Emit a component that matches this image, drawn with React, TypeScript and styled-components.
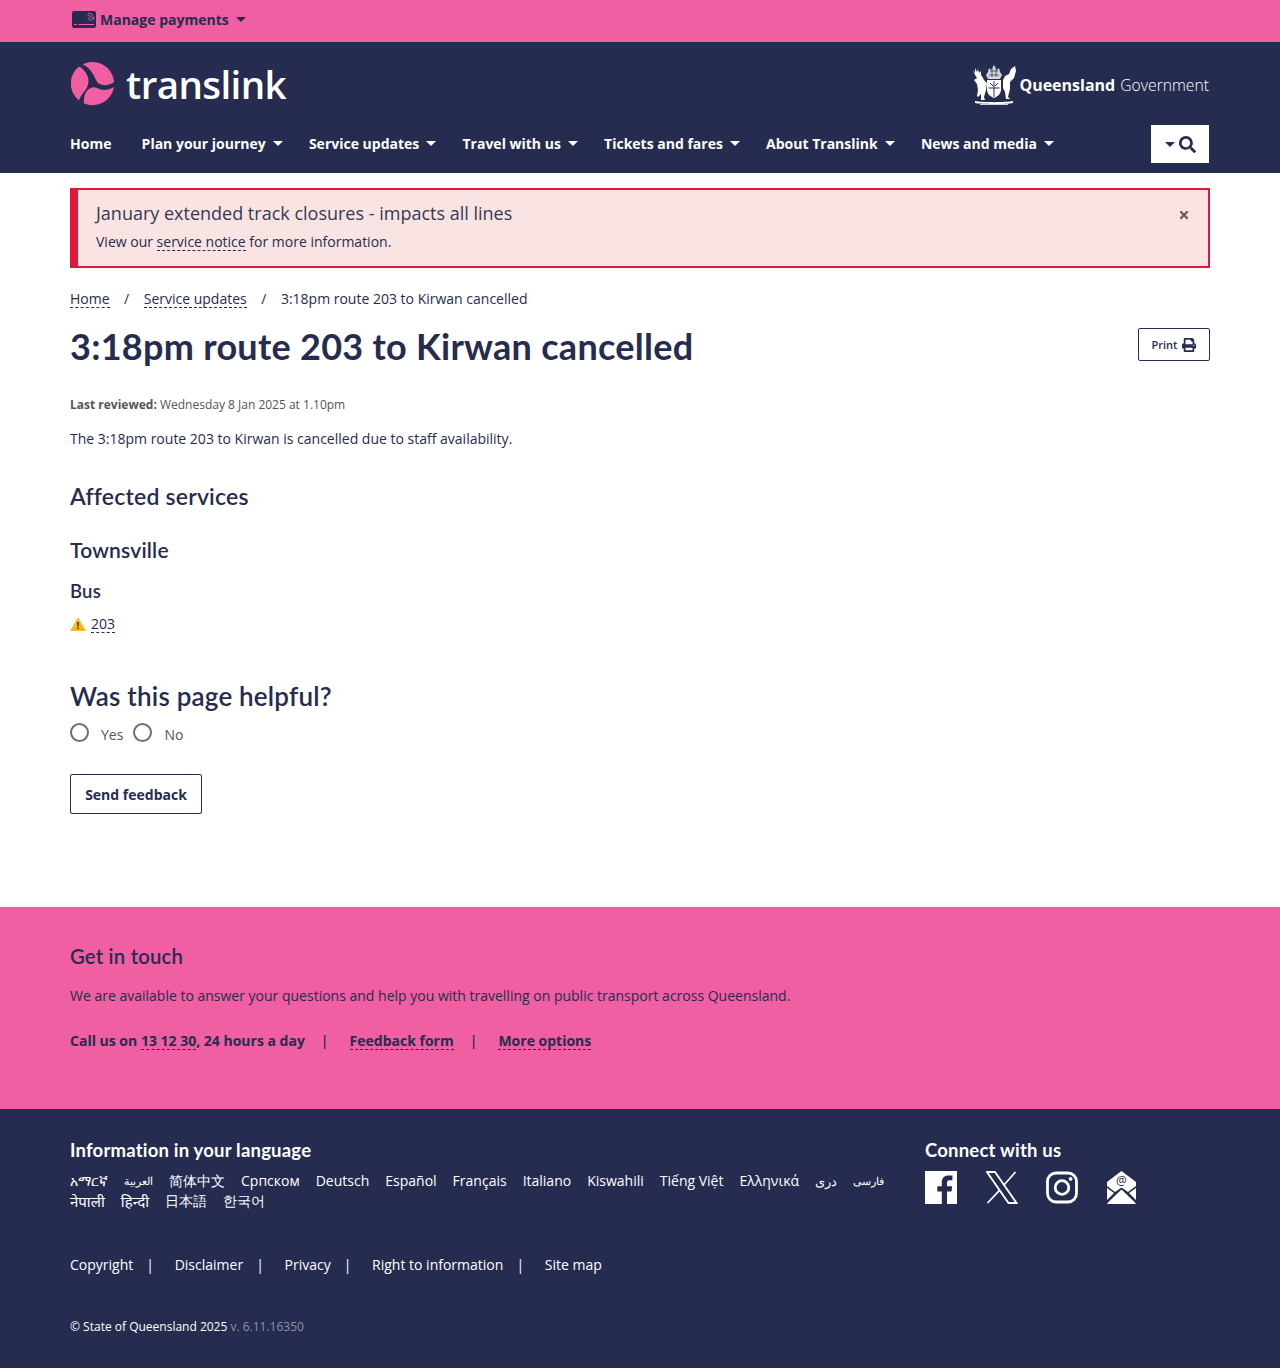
import styled, { createGlobalStyle } from "styled-components";
import { FaSearch, FaPrint, FaTimes } from "react-icons/fa";

const pink = "#f05fa2";
const navy = "#252c4f";

const GlobalStyle = createGlobalStyle`
  body {
    margin: 0;
    background: #fff;
    color: ${navy};
    font-family: "Open Sans", "Noto Sans", sans-serif;
    font-size: 14px;
  }
`;

const Wrap = styled.div`
  width: 1140px;
  margin: 0 auto;
`;

const TopBar = styled.div`
  background: ${pink};
  height: 42px;
`;

const Caret = styled.span<{ $color?: string }>`
  display: inline-block;
  width: 0;
  height: 0;
  border-left: 5px solid transparent;
  border-right: 5px solid transparent;
  border-top: 5px solid ${({ $color }) => $color ?? "#fff"};
  margin-left: 7px;
`;

const PayButton = styled.div`
  display: flex;
  align-items: center;
  height: 38px;
  padding-left: 2px;
  gap: 4px;
  font-size: 14px;
  font-weight: 700;
  ${Caret} {
    margin-left: 3px;
  }
`;

const Header = styled.header`
  background: ${navy};
  height: 131px;
`;

const BrandRow = styled.div`
  display: flex;
  justify-content: space-between;
  align-items: center;
  height: 83px;
`;

const Brand = styled.div`
  display: flex;
  align-items: center;
  gap: 11px;
  padding-left: 1px;
  color: #fff;
  font-size: 38.500px;
  font-weight: 600;
  letter-spacing: -0.6px;
`;

const Gov = styled.div`
  display: flex;
  align-items: center;
  gap: 3px;
  margin-top: 2px;
  color: #fff;
  padding-right: 1px;
  font-weight: 300;
  b {
    font-size: 16px;
    font-weight: 700;
    margin-right: 1px;
  }
`;

const GovName = styled.span`
  font-size: 15.700px;
`;

const NavRow = styled.nav`
  display: flex;
  align-items: center;
  justify-content: space-between;
  height: 38px;
  padding-right: 1px;
`;

const NavList = styled.div`
  display: flex;
  gap: 26.200px;
  margin-top: -2px;
`;

const NavItem = styled.a<{ $plain?: boolean }>`
  color: #fff;
  font-size: 14px;
  font-weight: 700;
  display: flex;
  align-items: center;
  margin-right: ${({ $plain }) => ($plain ? "4px" : "0")};
`;

const SearchButton = styled.div`
  width: 58px;
  height: 38px;
  background: #fff;
  display: flex;
  align-items: center;
  justify-content: center;
  gap: 4px;
  color: ${navy};
  font-size: 17px;
  ${Caret} {
    margin: 0;
  }
`;

const Main = styled.main`
  height: 734px;
  padding-top: 15px;
  box-sizing: border-box;
`;

const Alert = styled.div`
  display: flex;
  justify-content: space-between;
  height: 80px;
  box-sizing: border-box;
  background: #f9e4e3;
  border: 2px solid #e4173a;
  border-left-width: 8px;
  padding: 11px 18px 0 18px;
`;

const AlertTitle = styled.div`
  font-size: 18px;
  line-height: 24px;
  color: #333a56;
`;

const AlertText = styled.div`
  font-size: 14px;
  line-height: 20px;
  margin-top: 7px;
`;

const Dashed = styled.a`
  display: inline-block;
  line-height: 17px;
  border-bottom: 1px dashed currentColor;
`;

const CloseIcon = styled.span`
  color: #6b5a5f;
  font-size: 12px;
  margin-top: 7px;
`;

const Crumbs = styled.div`
  display: flex;
  align-items: baseline;
  gap: 14.500px;
  margin-top: 21px;
  line-height: 20px;
  font-size: 14px;
`;

const TitleRow = styled.div`
  display: flex;
  justify-content: space-between;
  align-items: flex-start;
  margin-top: 12px;
`;

const Title = styled.h1`
  margin: 0;
  font-family: Lato, sans-serif;
  font-size: 36px;
  line-height: 50px;
  font-weight: 700;
  letter-spacing: 0.28px;
`;

const PrintButton = styled.div`
  display: flex;
  align-items: center;
  justify-content: center;
  gap: 5px;
  width: 72px;
  height: 33px;
  box-sizing: border-box;
  border: 1px solid ${navy};
  border-radius: 2px;
  font-size: 11px;
  font-weight: 600;
  margin-top: 7px;
  svg {
    font-size: 14px;
  }
`;

const Reviewed = styled.p`
  margin: 25px 0 0;
  font-size: 12px;
  line-height: 18px;
  color: #555;
  b {
    font-weight: 700;
  }
`;

const Body = styled.p`
  margin: 15px 0 0;
  font-size: 14px;
  line-height: 20px;
`;

const Heading = styled.h2<{ $size: number; $top: number }>`
  margin: ${({ $top }) => $top}px 0 0;
  font-family: Lato, sans-serif;
  font-size: ${({ $size }) => $size}px;
  line-height: 30px;
  font-weight: 600;
  letter-spacing: 0.2px;
`;

const Service = styled.div`
  display: flex;
  align-items: center;
  gap: 5px;
  margin-top: 7px;
  height: 21px;
`;

const Radios = styled.div`
  display: flex;
  align-items: center;
  margin-top: 10px;
  height: 26px;
  color: #555;
`;

const Radio = styled.span`
  width: 19px;
  height: 19px;
  box-sizing: border-box;
  border: 2px solid #6e6e6e;
  border-radius: 50%;
  margin-top: -4px;
`;

const RadioLabel = styled.label`
  margin: 0 10px 0 12px;
  line-height: 20px;
  padding-top: 1px;
`;

const SendButton = styled.div`
  display: flex;
  align-items: center;
  justify-content: center;
  width: 132px;
  height: 40px;
  box-sizing: border-box;
  border: 1px solid ${navy};
  border-radius: 2px;
  font-weight: 700;
  margin-top: 27px;
`;

const Touch = styled.section`
  background: ${pink};
  height: 202px;
  padding-top: 34px;
  box-sizing: border-box;
`;

const TouchLinks = styled.div`
  display: flex;
  align-items: baseline;
  font-weight: 700;
  margin-top: 25px;
  line-height: 20px;
`;

const Sep = styled.span`
  margin: 0 21px 0 16px;
  font-weight: 600;
`;

const Footer = styled.footer`
  background: ${navy};
  height: 259px;
  color: #fff;
  padding-top: 27px;
  box-sizing: border-box;
`;

const FooterTop = styled.div`
  display: flex;
  justify-content: space-between;
`;

const FooterHeading = styled.div`
  font-family: Lato, sans-serif;
  font-size: 18.500px;
  font-weight: 700;
  letter-spacing: 0.2px;
  line-height: 28px;
`;

const Languages = styled.div`
  width: 830px;
  display: flex;
  flex-wrap: wrap;
  gap: 0 16px;
  line-height: 20px;
  margin-top: 7px;
`;

const Language = styled.a<{ $size?: number }>`
  font-size: ${({ $size }) => $size ?? 14}px;
`;

const Connect = styled.div`
  width: 285px;
`;

const Socials = styled.div`
  display: flex;
  align-items: center;
  gap: 28.700px;
  margin-top: 7px;
  svg {
    display: block;
  }
`;

const LegalLinks = styled.div`
  display: flex;
  margin-top: 44px;
  line-height: 20px;
`;

const LegalSep = styled.span`
  margin: 0 20.700px 0 13px;
`;

const Copy = styled.div`
  margin-top: 43px;
  font-size: 12px;
  line-height: 18px;
  span {
    color: #8f93a6;
  }
`;

const languages: { label: string; size?: number }[] = [
  { label: "አማርኛ" },
  { label: "العربية", size: 10.5 },
  { label: "简体中文" },
  { label: "Српском" },
  { label: "Deutsch" },
  { label: "Español" },
  { label: "Français" },
  { label: "Italiano" },
  { label: "Kiswahili" },
  { label: "Tiếng Việt" },
  { label: "Ελληνικά" },
  { label: "دری", size: 13 },
  { label: "فارسی", size: 11 },
  { label: "नेपाली", size: 15 },
  { label: "हिन्दी", size: 15 },
  { label: "日本語" },
  { label: "한국어" },
];
const navItems = ["Plan your journey", "Service updates", "Travel with us", "Tickets and fares", "About Translink", "News and media"];
const legal = ["Copyright", "Disclaimer", "Privacy", "Right to information"];

function TranslinkMark() {
  return (
    <svg width="44" height="44" viewBox="0 0 44 44" fill={pink}>
      <path d="M11.700 2.300 A21.700 21.700 0 0 1 43.100 20 C38 24 31 24 27 21 C24 18 22 7 11.700 2.300 Z" />
      <path d="M8 4.500 A21.700 21.700 0 0 0 8 38.500 C10 31 17.500 28 17.500 19 C17.500 13 13 7 8 4.500 Z" />
      <path d="M13 41.500 A21.700 21.700 0 0 0 43 25 C37 28.500 31 29 26 26 C20 23 11.500 29 13 41.500 Z" />
    </svg>
  );
}

function Crest() {
  return (
    <svg width="44" height="42" viewBox="0 0 44 42" fill="#fff">
      <path d="M15 16 h14 v9 c0 6 -4 7.500 -7 9 c-3 -1.500 -7 -3 -7 -9 Z" />
      <path d="M22 17 v16 M16.500 24 h11 M18 19 l3 3 M23 22 l3 -3" stroke={navy} strokeWidth="1" />
      <path d="M1 6 l2 3 l0 -5 l2 4 l1 -3 l1 4 l2 -2 l0 4 l2 3 l1 2 l3 3 l-1 7 l-2 7 l1 3 l-4 0 l0 -6 l-3 3 l-1 -1 l1 -6 l-1 -6 l-3 -4 l3 -2 l-2 -3 Z" />
      <path d="M43 2 l1 5 l-2 7 l-4 4 l0 7 l-2 8 l2 2 l-4 0 l-1 -7 l-2 -4 l0 -8 l2 -4 l4 -2 l2 -5 Z" />
      <path d="M16 15 l-2 -4 l2 -3 l1 -4 l2 2 l3 -5 l3 5 l2 -2 l1 4 l2 3 l-2 4 Z" opacity="0.800" />
      <path d="M18 7 h8 M17 11 h10 M20 3 v10 M24 3 v10" stroke={navy} strokeWidth="0.700" />
      <path d="M3 37 c6 1.500 32 1.500 38 0 v2 c-6 1.500 -32 1.500 -38 0 Z" />
      <path d="M8 40 h28 v1 h-28 Z" opacity="0.800" />
    </svg>
  );
}

function PayIcon() {
  return (
    <svg width="24" height="17" viewBox="0 0 24 17">
      <rect width="24" height="17" rx="2" fill={navy} />
      <path d="M2 13.500 h3 M6.500 13.500 h15.500" stroke={pink} strokeWidth="1" />
      <path d="M15.500 7 a3 3 0 0 1 3 3 M15.500 4.500 a5.500 5.500 0 0 1 5.500 5 M16 2 a7 7 0 0 1 6 6" stroke={pink} strokeWidth="0.900" fill="none" />
    </svg>
  );
}

function WarningIcon() {
  return (
    <svg width="16" height="14" viewBox="0 0 16 14">
      <path d="M8 0.500 L16 14 H0 Z" fill="#fdb71a" />
      <path d="M7.200 5 h1.600 l-0.200 4.500 h-1.200 Z M7.200 10.500 h1.600 v1.600 h-1.600 Z" fill={navy} />
    </svg>
  );
}

function FacebookIcon() {
  return (
    <svg width="32" height="33" viewBox="0 0 32 33">
      <path fill="#fff" fillRule="evenodd" d="M0 0 H32 V33 H22 V20.500 H26.500 L27.200 15.200 H22 V12 C22 10.400 22.500 9.300 24.700 9.300 H27.400 V4.600 C26.900 4.500 25.300 4.400 23.500 4.400 C19.500 4.400 16.800 6.800 16.800 11.300 V15.200 H12.300 V20.500 H16.800 V33 H0 Z" />
    </svg>
  );
}

function XIcon() {
  return (
    <svg width="32" height="33" viewBox="0 0 32 33" fill="none" stroke="#fff" strokeWidth="1.800">
      <path d="M1 1 H9 L30.500 32 H22.500 Z" />
      <path d="M29.500 1 L17.500 14.500 M14 18.800 L1.500 32" />
    </svg>
  );
}

function InstagramIcon() {
  return (
    <svg width="32" height="33" viewBox="0 0 32 33" fill="none" stroke="#fff" strokeWidth="2.800">
      <rect x="1.500" y="2" width="29" height="29" rx="8.500" />
      <circle cx="16" cy="16.500" r="6.800" />
      <circle cx="24.600" cy="7.900" r="1.900" fill="#fff" stroke="none" />
    </svg>
  );
}

function MailIcon() {
  return (
    <svg width="29" height="33" viewBox="0 0 29 33" fill="#fff">
      <path d="M14.500 0 L29 11 V15 L21 21 L14.500 16.500 L8 21 L0 15 V11 Z" />
      <path d="M0 17 L7 22 L0 29 Z M29 17 L22 22 L29 29 Z" />
      <path d="M14.500 18.500 L27.500 31 L29 33 H0 L1.500 31 Z" />
      <text x="14.500" y="14" fontSize="12" fontFamily="'Open Sans', sans-serif" textAnchor="middle" fill={navy}>@</text>
    </svg>
  );
}

export default function App() {
  return (
    <>
      <GlobalStyle />
      <TopBar>
        <Wrap>
          <PayButton>
            <PayIcon />
            Manage payments
            <Caret $color={navy} />
          </PayButton>
        </Wrap>
      </TopBar>
      <Header>
        <Wrap>
          <BrandRow>
            <Brand>
              <TranslinkMark />
              translink
            </Brand>
            <Gov>
              <Crest />
              <GovName>
                <b>Queensland</b> Government
              </GovName>
            </Gov>
          </BrandRow>
          <NavRow>
            <NavList>
              <NavItem $plain>Home</NavItem>
              {navItems.map((item) => (
                <NavItem key={item}>
                  {item}
                  <Caret />
                </NavItem>
              ))}
            </NavList>
            <SearchButton>
              <Caret $color={navy} />
              <FaSearch />
            </SearchButton>
          </NavRow>
        </Wrap>
      </Header>
      <Main>
        <Wrap>
          <Alert>
            <div>
              <AlertTitle>January extended track closures - impacts all lines</AlertTitle>
              <AlertText>
                View our <Dashed>service notice</Dashed> for more information.
              </AlertText>
            </div>
            <CloseIcon>
              <FaTimes />
            </CloseIcon>
          </Alert>
          <Crumbs>
            <Dashed>Home</Dashed>
            <span>/</span>
            <Dashed>Service updates</Dashed>
            <span>/</span>
            <span>3:18pm route 203 to Kirwan cancelled</span>
          </Crumbs>
          <TitleRow>
            <Title>3:18pm route 203 to Kirwan cancelled</Title>
            <PrintButton>
              Print <FaPrint />
            </PrintButton>
          </TitleRow>
          <Reviewed>
            <b>Last reviewed:</b> Wednesday 8 Jan 2025 at 1.10pm
          </Reviewed>
          <Body>The 3:18pm route 203 to Kirwan is cancelled due to staff availability.</Body>
          <Heading $size={23} $top={32}>Affected services</Heading>
          <Heading $size={21} $top={24}>Townsville</Heading>
          <Heading $size={18.5} $top={11}>Bus</Heading>
          <Service>
            <WarningIcon />
            <Dashed>203</Dashed>
          </Service>
          <Heading $size={26} $top={47}>Was this page helpful?</Heading>
          <Radios>
            <Radio />
            <RadioLabel>Yes</RadioLabel>
            <Radio />
            <RadioLabel>No</RadioLabel>
          </Radios>
          <SendButton>Send feedback</SendButton>
        </Wrap>
      </Main>
      <Touch>
        <Wrap>
          <Heading $size={20.3} $top={0}>Get in touch</Heading>
          <Body>We are available to answer your questions and help you with travelling on public transport across Queensland.</Body>
          <TouchLinks>
            <span>
              Call us on <Dashed>13 12 30</Dashed>, 24 hours a day
            </span>
            <Sep>|</Sep>
            <Dashed>Feedback form</Dashed>
            <Sep>|</Sep>
            <Dashed>More options</Dashed>
          </TouchLinks>
        </Wrap>
      </Touch>
      <Footer>
        <Wrap>
          <FooterTop>
            <div>
              <FooterHeading>Information in your language</FooterHeading>
              <Languages>
                {languages.map((lang) => (
                  <Language key={lang.label} $size={lang.size}>{lang.label}</Language>
                ))}
              </Languages>
            </div>
            <Connect>
              <FooterHeading>Connect with us</FooterHeading>
              <Socials>
                <FacebookIcon />
                <XIcon />
                <InstagramIcon />
                <MailIcon />
              </Socials>
            </Connect>
          </FooterTop>
          <LegalLinks>
            {legal.map((item) => (
              <span key={item}>
                {item}
                <LegalSep>|</LegalSep>
              </span>
            ))}
            <span>Site map</span>
          </LegalLinks>
          <Copy>
            © State of Queensland 2025 <span>v. 6.11.16350</span>
          </Copy>
        </Wrap>
      </Footer>
    </>
  );
}
